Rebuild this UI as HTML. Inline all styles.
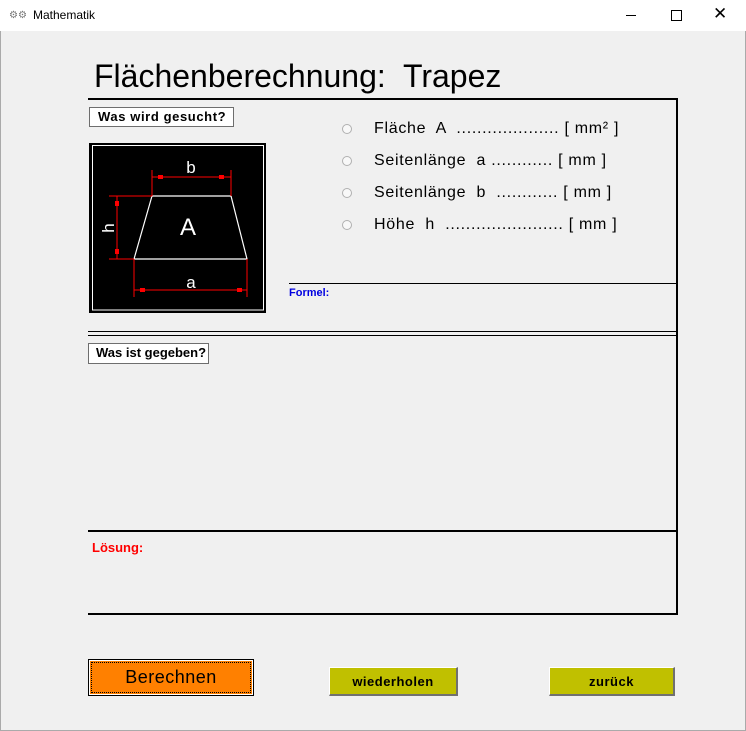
<!DOCTYPE html>
<html><head><meta charset="utf-8"><style>
body{margin:0;width:746px;height:731px;background:#f0f0f0;position:relative;overflow:hidden;font-family:"Liberation Sans",sans-serif}
.a{position:absolute}
.ln{position:absolute;background:#000}
.lbl{position:absolute;background:#fff;border:1px solid #6e6e6e;font-weight:bold;font-size:13px;line-height:18px;padding-left:8px;box-sizing:border-box;letter-spacing:0.6px;white-space:nowrap}
.opt{position:absolute;left:374px;font-size:16px;color:#000;white-space:pre;letter-spacing:0.7px}
.rad{position:absolute;left:342px;width:10px;height:10px;border-radius:50%;border:1px solid #b0b0b0;background:#f8f8f8;box-sizing:border-box}
.btn{position:absolute;font-weight:bold;font-size:13px;text-align:center;box-sizing:border-box;letter-spacing:0.5px}
</style></head><body>
<div class="a" style="left:0;top:0;width:746px;height:31px;background:#fff"></div>
<div class="a" style="left:9px;top:10px;font-size:10px;color:#777">⚙⚙</div>
<div class="a" style="left:33px;top:8px;font-size:12px">Mathematik</div>
<div class="a" style="left:626px;top:15px;width:10px;height:1px;background:#000"></div>
<div class="a" style="left:671px;top:10px;width:9px;height:9px;border:1px solid #000"></div>
<div class="a" style="left:713px;top:4px;font-size:17px;font-weight:300">✕</div>
<div class="a" style="left:0;top:31px;width:1px;height:700px;background:#aaa"></div>
<div class="a" style="left:745px;top:31px;width:1px;height:700px;background:#aaa"></div>
<div class="a" style="left:0;top:730px;width:746px;height:1px;background:#aaa"></div>

<div class="a" style="left:94px;top:58px;font-size:32px;white-space:pre">Flächenberechnung:  Trapez</div>
<div class="ln" style="left:88px;top:98px;width:590px;height:2px"></div>
<div class="ln" style="left:676px;top:98px;width:2px;height:517px"></div>
<div class="lbl" style="left:89px;top:107px;width:145px;height:20px">Was wird gesucht?</div>

<svg class="a" style="left:89px;top:143px" width="177" height="170" viewBox="89 143 177 170">
<rect x="89" y="143" width="177" height="170" fill="#000"/>
<rect x="92.5" y="145.5" width="171" height="164.5" fill="none" stroke="#fff" stroke-width="1"/>
<polygon points="152,196 231,196 247,259 134,259" fill="none" stroke="#fff" stroke-width="1.2"/>
<g stroke="#f00" stroke-width="1" fill="none">
<line x1="152" y1="170" x2="152" y2="196"/><line x1="231" y1="170" x2="231" y2="196"/>
<line x1="152" y1="177" x2="231" y2="177"/>
<line x1="109" y1="196" x2="152" y2="196"/><line x1="109" y1="259" x2="134" y2="259"/>
<line x1="117" y1="196" x2="117" y2="259"/>
<line x1="134" y1="259" x2="134" y2="297"/><line x1="247" y1="259" x2="247" y2="297"/>
<line x1="134" y1="290" x2="247" y2="290"/>
</g>
<g fill="#f00">
<rect x="158" y="175" width="5" height="4"/><rect x="219" y="175" width="5" height="4"/>
<rect x="115" y="201" width="4" height="5"/><rect x="115" y="249" width="4" height="5"/>
<rect x="140" y="288" width="5" height="4"/><rect x="237" y="288" width="5" height="4"/>
</g>
<g fill="#fff" font-family="Liberation Sans,sans-serif">
<text x="191" y="173" font-size="17" text-anchor="middle">b</text>
<text x="188" y="235" font-size="24" text-anchor="middle">A</text>
<text x="191" y="288" font-size="17" text-anchor="middle">a</text>
<text x="0" y="0" font-size="17" text-anchor="middle" transform="translate(114,228) rotate(-90)">h</text>
</g>
</svg>

<div class="rad" style="top:124px"></div><div class="opt" style="top:120px">Fläche  A  .................... [ mm² ]</div>
<div class="rad" style="top:156px"></div><div class="opt" style="top:152px">Seitenlänge  a ............ [ mm ]</div>
<div class="rad" style="top:188px"></div><div class="opt" style="top:184px">Seitenlänge  b  ............ [ mm ]</div>
<div class="rad" style="top:220px"></div><div class="opt" style="top:216px">Höhe  h  ....................... [ mm ]</div>

<div class="ln" style="left:289px;top:283px;width:388px;height:1px"></div>
<div class="a" style="left:289px;top:287px;font-size:11px;font-weight:bold;color:#0000e0">Formel:</div>
<div class="ln" style="left:88px;top:331px;width:589px;height:1px"></div>
<div class="ln" style="left:88px;top:335px;width:589px;height:1px"></div>
<div class="lbl" style="left:88px;top:343px;width:121px;height:21px;padding-left:7px;letter-spacing:0px">Was ist gegeben?</div>
<div class="ln" style="left:88px;top:530px;width:590px;height:2px"></div>
<div class="a" style="left:92px;top:540px;font-size:13px;font-weight:bold;color:#f00">Lösung:</div>
<div class="ln" style="left:88px;top:613px;width:590px;height:2px"></div>

<div class="btn" style="left:88px;top:659px;width:166px;height:37px;border:1px solid #000;outline:1px solid #fff;outline-offset:-2px;background:#ff8000;font-weight:normal;font-size:18px;line-height:35px">
<div style="position:absolute;left:2px;top:2px;right:2px;bottom:2px;border:1px dotted #000"></div>Berechnen</div>
<div class="btn" style="left:329px;top:667px;width:129px;height:29px;background:#c0c000;border-top:1px solid #fff;border-left:1px solid #fff;border-right:2px solid #707070;border-bottom:2px solid #707070;line-height:27px">wiederholen</div>
<div class="btn" style="left:549px;top:667px;width:126px;height:29px;background:#c0c000;border-top:1px solid #fff;border-left:1px solid #fff;border-right:2px solid #707070;border-bottom:2px solid #707070;line-height:27px">zurück</div>
</body></html>
